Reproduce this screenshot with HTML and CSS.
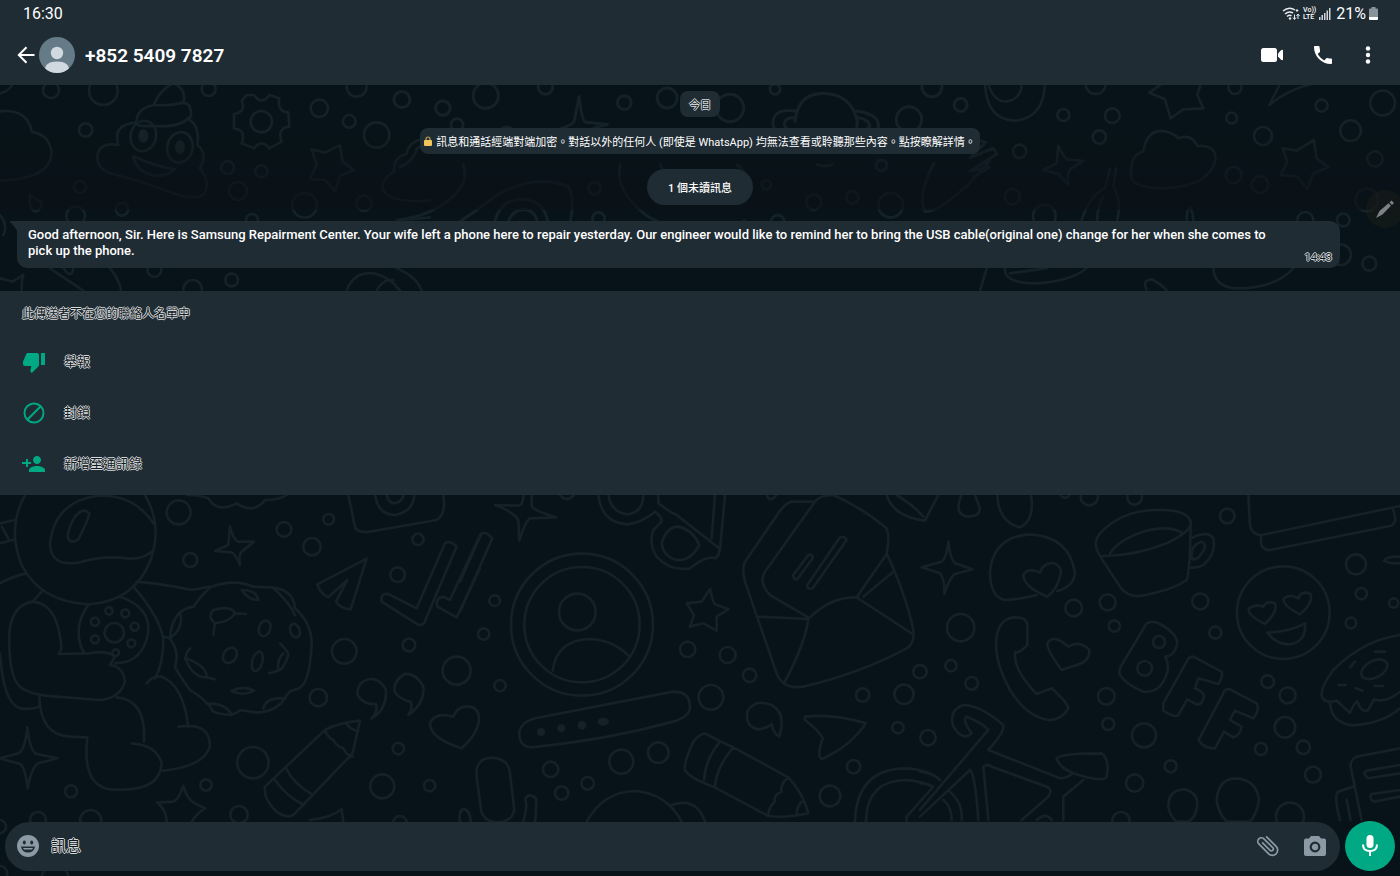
FILE: index.html
```html
<!DOCTYPE html>
<html lang="zh-Hant">
    <head>
        <meta charset="utf-8">
        <title>+852 5409 7827</title>
        <link rel="stylesheet" href="styles.css">
    </head>
    <body>
        <svg class="wallpaper" viewBox="0 0 1400 876" preserveAspectRatio="xMidYMid slice" aria-hidden="true">
            <defs>
                <linearGradient id="shade" x1="0" y1="0" x2="0" y2="1">
                    <stop offset="0" stop-color="#0b1118" stop-opacity="0" />
                    <stop offset="0.6" stop-color="#0b1118" stop-opacity="0.6" />
                    <stop offset="1" stop-color="#0b1118" stop-opacity="0.6" />
                </linearGradient>
            </defs>

            <!-- Top left: cloud, poop, gear, stars -->
            <g transform="translate(0 80) scale(.3333)">
                <path d="M-20 100Q20 85 55 100Q90 115 95 155Q150 165 155 220Q150 300-10 302M-10 42Q25 38 38 12" />
                <path d="M515 12Q475 35 462 75Q405 85 410 135Q430 140 470 138Q540 145 573 108Q575 70 550 68Q560 30 525 12M462 75Q510 78 550 68M405 128Q350 135 352 170Q350 185 355 195Q300 185 292 225Q290 265 330 280Q430 305 520 340Q580 360 610 345Q635 310 600 265Q625 220 592 195Q600 140 568 118" />
                <ellipse cx="430" cy="168" rx="38" ry="46" transform="rotate(12 430 168)" />
                <ellipse cx="540" cy="202" rx="38" ry="46" transform="rotate(12 540 202)" />
                <ellipse class="solid" cx="430" cy="168" rx="15" ry="21" />
                <ellipse class="solid" cx="540" cy="202" rx="15" ry="21" />
                <path d="M400 228Q460 258 525 268Q495 295 455 285Q405 270 400 228Z" />
                <path d="M740 45L762 45Q785 78 808 45L838 55Q830 95 865 97L868 140Q830 145 845 185L808 205Q785 175 762 205L725 190Q740 150 702 145L702 102Q740 95 725 62Z" />
                <circle cx="784" cy="125" r="32" />
                <path d="M935 208L975 218L1020 196L1028 245L1062 270L1020 288L1005 335L975 300L930 298L950 255Z" />
                <path d="M1290 172Q1225 180 1220 222Q1180 230 1182 275Q1140 300 1150 330Q1170 370 1290 362M90 345Q85 395 110 395Q130 380 122 365Q105 355 90 345M0 405Q25 435 10 465M0 595Q20 600 38 605L70 585Q62 610 66 640M150 565L250 632M330 565Q360 600 365 640M190 565Q215 600 220 565M1040 632Q1060 575 1120 580Q1170 590 1200 632M1130 632Q1150 595 1180 600M1190 565Q1250 590 1265 632M1190 420Q1240 418 1290 412" />
                <circle cx="153" cy="30" r="24" /><circle cx="310" cy="32" r="43" /><circle cx="626" cy="27" r="21" />
                <circle cx="257" cy="150" r="20" /><circle cx="958" cy="85" r="26" /><circle cx="1048" cy="124" r="19" />
                <circle cx="1070" cy="20" r="30" /><circle cx="1130" cy="165" r="38" />
                <circle cx="683" cy="263" r="19" /><circle cx="784" cy="274" r="18" /><circle cx="714" cy="333" r="27" />
                <circle cx="914" cy="376" r="37" /><circle cx="1092" cy="370" r="23" /><circle cx="240" cy="321" r="18" />
                <circle cx="227" cy="408" r="28" /><circle cx="366" cy="388" r="19" /><circle cx="756" cy="420" r="18" />
                <circle cx="463" cy="570" r="21" /><circle cx="578" cy="628" r="28" /><circle cx="695" cy="600" r="19" />
            </g>

            <!-- Top middle: planet, sparkle, guitar -->
            <g transform="translate(400 85) scale(.3827)">
                <path d="M468 30Q475 95 485 97L542 103Q500 110 490 125H435L408 118Q450 105 455 95ZM1032 95Q1040 20 1110 22Q1180 25 1195 95Q1195 110 1190 125M1035 68Q970 60 975 105Q980 125 1000 125M1190 68Q1250 75 1250 105Q1250 125 1235 125M1035 85Q1000 85 1005 105Q1010 120 1035 122M1195 85Q1225 90 1228 108Q1210 125 1195 120" />
                <path d="M0 215Q35 200 45 165L70 155M165 208Q180 250 145 285Q90 340 0 352M90 400Q200 330 250 290Q350 230 440 265Q465 310 430 405M245 405Q240 300 320 298Q400 305 385 405M270 405Q280 325 325 325Q370 330 358 405M575 208Q560 280 650 345Q780 420 900 355M680 208Q690 240 720 240M880 208Q920 240 900 270M1395 205Q1350 290 1372 330Q1400 335 1480 265L1540 200M1500 140L1530 150L1490 190L1550 165L1560 180L1490 225L1540 215L1500 240" />
                <path d="M1090 208Q1110 215 1130 208" />
                <circle cx="5" cy="38" r="21" /><circle cx="224" cy="28" r="33" /><circle cx="112" cy="60" r="19" />
                <circle cx="149" cy="104" r="16" /><circle cx="380" cy="5" r="19" /><circle cx="586" cy="46" r="18" />
                <circle cx="698" cy="34" r="26" /><circle cx="862" cy="60" r="36" /><circle cx="980" cy="11" r="13" />
                <circle cx="1330" cy="90" r="33" /><circle cx="1390" cy="5" r="26" /><circle cx="1465" cy="52" r="17" />
                <circle cx="278" cy="130" r="20" /><circle cx="508" cy="270" r="16" /><circle cx="519" cy="349" r="16" />
                <circle cx="957" cy="261" r="12" /><circle cx="1081" cy="306" r="20" /><circle cx="1182" cy="294" r="16" />
                <circle cx="1282" cy="314" r="32" /><circle cx="987" cy="357" r="17" /><circle cx="1174" cy="396" r="22" />
                <circle cx="1258" cy="210" r="14" /><circle cx="1480" cy="398" r="16" />
            </g>

            <!-- Top right: cloud, stars, bottle -->
            <g transform="translate(960 80) scale(.3333)">
                <path d="M75 12Q80 120 165 122Q250 115 255 12M85 12Q100 65 140 65Q185 55 185 12M568 38L605 12M568 38L615 58L632 115L670 88L730 85L712 45L722 12M960 12L928 75Q980 30 1055 12" />
                <path d="M515 298Q505 225 550 215Q560 150 610 153Q645 160 655 175Q695 160 712 198Q775 195 765 245Q745 320 610 325Q535 325 515 298Z" />
                <path d="M295 198Q310 230 322 238L370 243L330 268Q320 285 325 315L295 282L250 270L290 250ZM968 205L1010 212L1062 180L1070 235L1105 262L1060 280L1042 328L1012 290L962 285L982 245ZM450 265L435 325Q390 345 365 420M468 265L460 320Q485 360 472 420M430 350Q410 390 412 420M680 420Q680 390 690 380Q700 400 700 420M135 565Q130 610 230 610Q330 605 380 565M150 580Q220 570 260 565M760 565Q765 630 850 625Q950 620 1000 565M560 630Q545 600 575 598Q600 610 620 630M80 565L60 632" />
                <circle cx="310" cy="105" r="18" /><circle cx="407" cy="12" r="30" />
                <circle cx="457" cy="107" r="22" /><circle cx="418" cy="171" r="20" /><circle cx="179" cy="214" r="20" />
                <circle cx="825" cy="22" r="20" /><circle cx="815" cy="114" r="16" /><circle cx="909" cy="168" r="27" />
                <circle cx="1085" cy="77" r="18" /><circle cx="1268" cy="69" r="37" /><circle cx="1172" cy="152" r="31" />
                <circle cx="1245" cy="237" r="23" /><circle cx="821" cy="285" r="24" /><circle cx="900" cy="314" r="25" />
                <circle cx="157" cy="350" r="23" /><circle cx="253" cy="408" r="34" />
                <circle cx="1221" cy="360" r="34" /><circle cx="1036" cy="420" r="24" /><circle cx="1150" cy="420" r="19" />
                <circle cx="1142" cy="524" r="31" /><circle cx="1228" cy="551" r="21" />
            </g>

            <rect class="shade" x="0" y="135" width="1400" height="75" fill="url(#shade)" />

            <!-- Bottom left: astronaut, cookie, pencil -->
            <g transform="translate(0 490) scale(.3333)">
                <path d="M75 15Q20 115 65 225Q120 335 265 343Q400 335 450 215Q490 110 435 15M455 185Q425 210 380 205Q310 195 235 218Q150 230 150 160Q165 35 290 18Q400 10 460 100M225 80Q250 50 268 70Q265 90 235 148Q210 165 203 140Q205 110 225 80M0 100L45 90M5 110L25 145M0 160L45 148M0 280Q35 260 80 250M125 305L98 335M98 335Q35 345 28 430Q25 560 60 590Q90 615 170 620L300 630Q360 625 375 575Q370 530 330 525L345 500Q320 480 270 490L175 492Q190 480 180 440Q165 340 98 335M0 490Q10 640 60 655Q95 660 118 650M118 618Q120 735 210 740L262 742Q245 885 330 898Q480 910 485 820Q470 765 395 760M350 622Q440 630 432 755M440 580Q460 555 485 560Q550 585 565 710M535 710Q630 695 630 770Q610 830 490 842" />
                <path d="M265 345Q225 400 240 460Q245 480 255 490M360 320Q450 350 445 425Q430 520 345 520M400 290Q480 380 490 450Q490 520 465 565M410 275Q480 280 575 300L630 290M490 440L510 445" />
                <path d="M630 292Q700 265 760 290L820 293Q880 300 885 355Q935 400 935 460Q930 590 890 598Q865 600 855 625Q830 665 770 668L720 660Q700 685 640 665Q620 630 570 600Q540 560 525 530Q540 490 510 445Q515 360 580 350Q600 320 630 292M820 293Q870 340 885 375M510 445Q550 415 542 375M725 300Q770 300 775 330Q745 330 725 300M738 372L705 370Q690 395 645 400L640 435M705 370Q695 345 640 360Q620 380 645 400M570 475Q545 505 570 510Q620 530 620 562Q580 565 555 505M620 562L645 568M840 460Q870 490 865 495Q850 540 835 542L808 550M850 490Q830 510 835 542M620 640Q680 640 695 675M790 655Q800 620 855 625M695 603Q730 585 762 602Q730 620 695 603" />
                <ellipse cx="794" cy="415" rx="17" ry="24" transform="rotate(20 794 415)" />
                <ellipse cx="885" cy="422" rx="14" ry="21" transform="rotate(-20 885 422)" />
                <ellipse cx="690" cy="496" rx="19" ry="25" transform="rotate(35 690 496)" />
                <ellipse cx="772" cy="514" rx="15" ry="30" transform="rotate(15 772 514)" />
                <circle cx="343" cy="428" r="29" /><circle cx="327" cy="363" r="11" /><circle cx="376" cy="370" r="12" />
                <circle cx="285" cy="395" r="12" /><circle cx="404" cy="410" r="12" /><circle cx="285" cy="448" r="12" />
                <circle cx="394" cy="460" r="12" /><circle cx="347" cy="488" r="10" />
                <path d="M690 110Q700 150 715 155L762 155L725 185Q715 195 720 225Q705 190 695 187L645 183L685 165ZM82 712Q90 785 110 792L172 805L115 820Q95 830 83 895Q75 830 60 822L0 805L55 790Q75 780 82 712ZM560 15Q600 15 625 25Q650 70 710 40Q760 75 795 30Q840 30 865 12" />
                <path d="M952 283L1100 206L1052 358Q1020 355 1008 335L1042 270L985 322Q960 310 952 283ZM1045 15L1065 110Q1070 130 1110 125L1310 90Q1340 70 1330 15M1125 15Q1135 75 1185 75Q1240 65 1243 15M1160 15Q1165 40 1185 40Q1208 35 1210 15" />
                <path d="M1145 335Q1140 310 1165 312L1250 355L1335 160Q1350 150 1370 170L1272 400Q1265 408 1250 402ZM1440 135L1350 330L1330 320Q1305 325 1312 350L1370 382L1440 235" />
                <path d="M1115 685Q1160 660 1158 600Q1140 565 1110 567Q1070 575 1073 615Q1090 645 1128 642Q1135 665 1115 685ZM1225 675Q1275 640 1270 590Q1250 550 1215 552Q1180 570 1184 605Q1200 630 1232 635Q1240 655 1225 675ZM1385 775Q1290 745 1290 700Q1305 665 1360 680Q1375 645 1410 650Q1440 655 1437 695Q1430 735 1385 775Z" />
                <path d="M1080 692L1058 790L885 970Q865 990 830 965Q790 930 795 890L975 720Q1010 700 1080 692M975 720Q985 745 1000 750Q1010 770 1030 775Q1040 795 1058 800M1040 700Q1050 720 1075 722M860 838Q880 880 938 915M825 870Q860 920 912 945M550 888Q560 925 580 938L615 955Q590 970 575 995M550 888Q535 930 520 935L472 938Q500 960 500 995M930 990Q990 985 1025 958L1030 995M1380 995Q1375 965 1392 958Q1410 960 1412 995" />
                <circle cx="536" cy="67" r="36" /><circle cx="852" cy="118" r="22" /><circle cx="986" cy="88" r="16" />
                <circle cx="936" cy="170" r="26" /><circle cx="571" cy="210" r="21" /><circle cx="1254" cy="148" r="17" />
                <circle cx="1193" cy="254" r="22" /><circle cx="1033" cy="484" r="37" /><circle cx="1227" cy="465" r="19" />
                <circle cx="1370" cy="542" r="42" /><circle cx="955" cy="623" r="26" /><circle cx="759" cy="818" r="47" />
                <circle cx="1195" cy="776" r="17" /><circle cx="1147" cy="889" r="36" /><circle cx="1289" cy="887" r="17" />
                <circle cx="618" cy="885" r="17" /><circle cx="213" cy="904" r="18" /><circle cx="717" cy="974" r="26" />
                <circle cx="114" cy="990" r="24" /><circle cx="272" cy="992" r="32" /><circle cx="1200" cy="998" r="20" />
                <circle cx="-2" cy="1010" r="20" /><circle cx="0" cy="1150" r="22" /><circle cx="165" cy="1165" r="40" />
            </g>

            <!-- Bottom middle: contact, envelope, pencil -->
            <g transform="translate(460 490) scale(.3333)">
                <path d="M190 15Q190 45 175 47L105 45Q160 65 175 90L178 152Q195 95 210 85L288 82Q230 65 215 50V15M0 275L65 130Q80 125 97 145L0 365" />
                <circle cx="366" cy="404" r="213" /><circle cx="366" cy="404" r="173" /><circle cx="352" cy="366" r="55" />
                <path d="M278 542Q290 450 390 447Q460 450 505 497M415 15Q425 100 505 103Q550 95 585 65Q605 80 605 95L580 120Q565 160 590 200Q630 245 690 235Q740 195 765 205Q780 195 778 175L650 75L630 65L595 40V15M445 15Q455 70 505 73Q550 65 550 15M605 160Q620 110 655 110Q700 120 718 165Q690 215 650 210Q610 200 605 160M755 145L765 15M780 180L795 15" />
                <path d="M750 297Q760 340 765 343L805 358L770 380V422L730 400L690 410L702 375L680 340L725 335Z" />
                <path d="M1065 35L995 35Q975 40 955 70L855 215Q845 235 855 275L950 550Q970 600 1030 590Q1200 550 1340 475Q1365 460 1360 420Q1340 320 1280 190Q1290 140 1280 115Q1210 55 1120 15Q1080 15 1065 35L915 245Q895 280 930 315L1045 382Q1040 450 975 575M890 380L1045 387Q1110 320 1190 322L1355 430M1190 322L1278 195M1210 320L1300 245M1045 195Q1060 190 1058 205L1012 268Q1000 270 1000 255ZM1140 142Q1155 138 1160 150L1058 295Q1040 300 1042 285ZM1280 15Q1300 80 1395 92L1435 15M1310 15Q1360 45 1390 80M920 15Q930 40 950 15M300 15Q320 40 342 15" />
                <path d="M225 685L640 605Q690 605 690 650Q690 680 640 695Q440 750 215 772Q175 770 178 725Q185 695 225 685Z" />
                <circle class="solid" cx="243" cy="726" r="12" /><circle class="solid" cx="304" cy="715" r="12" />
                <circle class="solid" cx="366" cy="706" r="13" /><ellipse class="solid" cx="430" cy="695" rx="17" ry="12" />
                <path d="M958 740Q980 670 935 645Q885 625 862 665Q855 715 900 718Q930 710 935 702Q940 730 958 740ZM1035 680Q1120 670 1218 700Q1170 770 1085 808Q1070 800 1088 745Q1080 725 1035 690ZM735 730Q715 735 700 755Q670 820 675 840Q690 865 760 890L925 978Q980 985 1045 970Q1030 910 985 862L820 772Q780 755 735 730M780 755Q735 810 732 870M820 772Q770 830 765 890M985 862Q960 880 965 905Q940 915 945 935Q925 950 925 978M1025 935Q1010 950 1010 975" />
                <path d="M50 860Q45 805 95 803Q145 805 150 850L163 960Q155 995 115 997Q70 995 63 960ZM190 995Q205 940 195 930Q205 905 228 925Q230 960 225 995M0 965Q10 950 25 965Q32 980 32 995M380 995Q430 905 525 903Q620 910 665 995M635 945Q710 920 735 995M1185 995Q1190 835 1340 835Q1410 840 1440 870M1218 995Q1220 870 1340 870Q1390 875 1420 890L1340 980V995" />
                <circle cx="104" cy="332" r="16" /><circle cx="71" cy="432" r="17" /><circle cx="120" cy="587" r="17" />
                <circle cx="683" cy="478" r="23" /><circle cx="803" cy="495" r="24" />
                <circle cx="869" cy="556" r="20" /><circle cx="753" cy="622" r="37" /><circle cx="1380" cy="545" r="20" />
                <circle cx="1332" cy="613" r="29" /><circle cx="1208" cy="615" r="20" /><circle cx="1314" cy="713" r="17" />
                <circle cx="1181" cy="830" r="20" /><circle cx="1110" cy="918" r="31" /><circle cx="484" cy="815" r="36" />
                <circle cx="595" cy="788" r="31" /><circle cx="272" cy="838" r="23" /><circle cx="305" cy="909" r="20" />
                <circle cx="383" cy="880" r="19" />
            </g>

            <!-- Bottom right: cup, phone, BFF, donut -->
            <g transform="translate(920 490) scale(.3333)">
                <path d="M125 15Q100 70 140 80Q185 80 178 50L165 15M232 15Q235 95 298 112Q345 95 333 15M85 155Q90 205 105 220L158 238L105 252Q90 260 73 312Q75 270 60 250L5 232L65 215Q80 205 85 155" />
                <path d="M350 315Q290 330 255 330Q210 320 210 245Q220 140 330 133Q450 140 465 250Q460 290 412 303M382 320Q310 290 310 255Q325 230 360 248Q370 215 405 220Q430 235 420 260Q410 300 382 320ZM425 540Q380 480 382 460Q400 430 445 470Q480 450 508 480Q510 515 470 525Z" />
                <path d="M540 198Q515 160 540 130Q600 65 700 60Q800 55 812 95Q820 120 740 160Q640 200 540 198L600 290Q620 320 660 318Q760 300 800 270Q810 250 812 100M570 190Q600 145 680 122Q750 105 790 130M812 145Q865 120 880 145Q890 190 850 225Q835 235 810 232M815 205Q810 165 845 155Q865 165 845 190Q830 215 815 205M985 15L990 105Q995 135 1025 135L1440 48M1025 135Q1015 180 1050 180L1410 108Q1435 100 1420 60M1440 200Q1400 198 1392 212Q1410 222 1440 220" />
                <path d="M230 440Q240 380 290 382Q325 385 322 410V465Q300 490 285 487Q280 540 350 612L395 595Q440 635 445 655Q425 690 385 690Q320 680 270 600Q220 510 230 440ZM680 400Q700 390 720 402Q790 440 765 480Q755 500 735 500Q755 530 730 575Q710 610 670 605Q620 585 600 555Q595 540 605 525ZM820 500L905 545Q910 560 895 582L835 565L825 595Q860 610 850 625Q845 645 830 643L802 628L775 675Q765 685 730 662V640L800 515Q805 500 820 500ZM930 598L1010 640Q1020 660 1000 685L945 662L930 690L965 710Q960 735 940 742L912 725L885 775Q850 775 836 750L910 610Q915 595 930 598Z" />
                <circle cx="717" cy="456" r="18" /><circle cx="674" cy="535" r="22" /><circle cx="1090" cy="368" r="139" />
                <path d="M1035 402Q980 375 987 355Q1010 340 1030 350Q1040 330 1065 340Q1075 365 1035 402ZM1140 373Q1085 345 1092 325Q1110 310 1135 325Q1145 300 1172 312Q1180 340 1140 373ZM1042 428Q1110 425 1155 400Q1160 455 1110 463Q1070 465 1042 428ZM1440 435Q1330 450 1240 540Q1195 600 1208 625Q1220 640 1250 632L1290 668Q1305 635 1312 635Q1325 670 1345 660L1362 628Q1400 640 1440 605M1230 640Q1235 700 1300 706Q1390 700 1440 655M1365 485H1395M1290 532L1305 515M1255 585H1278M1308 595L1328 602M1365 588H1390" />
                <ellipse cx="1363" cy="538" rx="42" ry="25" transform="rotate(-28 1363 538)" />
                <path d="M0 960L205 720Q190 700 140 680Q125 690 155 730Q130 755 100 710Q85 660 130 645Q180 645 250 705Q255 725 205 780L420 865Q440 865 460 850Q415 830 410 805Q420 790 545 790Q570 810 560 860Q550 880 460 850M0 980L150 840Q165 850 175 990M205 990L190 830Q200 820 220 832L380 890Q400 900 385 920L305 990M490 870L430 920V990M0 845Q40 850 60 870M0 880Q25 880 35 890M90 905Q130 940 125 990M70 930Q95 950 95 990M350 990Q380 965 395 990M1440 775L1310 800Q1290 810 1292 830L1325 990M1440 825L1340 842Q1325 850 1345 865L1440 850M1440 900L1355 912Q1345 925 1362 935L1440 920M1300 890L1255 905Q1240 915 1260 990M1280 930L1292 990" />
                <path d="M745 950Q745 900 790 898Q835 905 832 950Q825 985 805 995H770Q750 980 745 950M890 930Q895 865 950 865Q1010 870 1017 930Q1010 975 990 995H920Q895 970 890 930" />
                <circle cx="508" cy="20" r="26" /><circle cx="644" cy="22" r="22" /><circle cx="435" cy="8" r="15" />
                <circle cx="922" cy="78" r="22" /><circle cx="122" cy="413" r="41" /><circle cx="461" cy="354" r="25" />
                <circle cx="563" cy="337" r="24" /><circle cx="841" cy="334" r="24" /><circle cx="583" cy="408" r="17" />
                <circle cx="886" cy="428" r="18" /><circle cx="1308" cy="223" r="30" /><circle cx="1324" cy="311" r="17" />
                <circle cx="1421" cy="339" r="14" /><circle cx="1293" cy="399" r="16" /><circle cx="93" cy="527" r="17" />
                <circle cx="155" cy="580" r="19" /><circle cx="24" cy="743" r="23" /><circle cx="559" cy="619" r="25" />
                <circle cx="565" cy="702" r="18" /><circle cx="672" cy="736" r="36" /><circle cx="752" cy="829" r="18" />
                <circle cx="644" cy="879" r="26" /><circle cx="1043" cy="575" r="19" /><circle cx="1103" cy="616" r="24" />
                <circle cx="1095" cy="712" r="31" /><circle cx="1023" cy="777" r="18" /><circle cx="1150" cy="772" r="20" />
                <circle cx="1179" cy="854" r="24" /><circle cx="1110" cy="980" r="42" /><circle cx="603" cy="992" r="26" />
            </g>
        </svg>

        <header>
            <div class="status-bar">
                <span>16:30</span>
                <div class="status-icons">
                    <svg width="18" height="14" viewBox="0 0 18 14">
                        <path d="M1 4Q7-1 13 3M3 7Q7 3.500 11 6M5 9.500Q7.500 7.500 9.500 9" fill="none" stroke="#e8ecee" stroke-width="1.500" />
                        <circle cx="8" cy="11.500" r="1.200" fill="#e8ecee" />
                        <path d="M12.500 7.500V12M11 10.500l1.500 2 1.500-2M16 12V7.500M14.500 9l1.500-2 1.500 2M15 2v3M13.700 3.500h2.600" fill="none" stroke="#e8ecee" />
                    </svg>
                    <span class="volte">Vo))<br>LTE</span>
                    <svg width="12" height="12" viewBox="0 0 12 12">
                        <path d="M0 9h1.500v3H0zM2.500 7H4v5H2.500zM5 5h1.500v7H5zM7.500 2.500H9V12H7.500zM10 0h1.500v12H10z" fill="#cfd5d8" />
                    </svg>
                    <span class="battery-level">21%</span>
                    <svg width="9" height="13" viewBox="0 0 9 13">
                        <path d="M2.500 0h4v1.500H8q1 0 1 1V10H0V2.500q0-1 1-1h1.500z" fill="#89939a" />
                        <path d="M0 10h9v2q0 1-1 1H1q-1 0-1-1z" fill="#fff" />
                    </svg>
                </div>
            </div>
            <div class="app-bar">
                <button class="back" aria-label="返回">
                    <svg width="18" height="18" viewBox="0 0 18 18"><path d="M17.500 9H2M9.500 1.300L1.800 9l7.700 7.700" fill="none" stroke="#fff" stroke-width="2" /></svg>
                </button>
                <svg class="avatar" viewBox="0 0 36 36">
                    <defs><clipPath id="avatar-clip"><circle cx="18" cy="18" r="18" /></clipPath></defs>
                    <g clip-path="url(#avatar-clip)">
                        <rect width="36" height="36" fill="#667b88" />
                        <circle cx="18" cy="16" r="6.200" fill="#cfd9df" />
                        <path d="M6 33Q6 24.500 18 24.500T30 33V36H6z" fill="#cfd9df" />
                    </g>
                </svg>
                <h1>+852 5409 7827</h1>
                <div class="actions">
                    <button aria-label="視像通話">
                        <svg width="24" height="24" viewBox="0 0 24 24"><rect x="1" y="5" width="16" height="14" rx="2.500" fill="#fff" /><path d="M18 10.500L21 7.200Q23 6 23 8V16Q23 18 21 16.800L18 13.500z" fill="#fff" /></svg>
                    </button>
                    <button aria-label="語音通話">
                        <svg width="24" height="24" viewBox="0 0 24 24"><path d="M6.540 5c.06.890.210 1.760.450 2.590l-1.200 1.200c-.410-1.200-.670-2.470-.760-3.790zM4 3h3.500c.550 0 1 .450 1 1 0 1.250.200 2.450.570 3.570.110.350.030.740-.250 1.020l-2.200 2.200c1.440 2.830 3.760 5.140 6.590 6.590l2.200-2.200c.280-.280.670-.360 1.020-.250 1.120.370 2.320.570 3.570.570.550 0 1 .450 1 1V20c0 .550-.450 1-1 1C10.610 21 3 13.390 3 4c0-.550.450-1 1-1z" fill="#fff" /><path d="M4 4h4l1 5-3 2zM20 20v-3.500l-4-1-3 3z" fill="#fff" /></svg>
                    </button>
                    <button class="more" aria-label="更多選項">
                        <svg width="24" height="24" viewBox="0 0 24 24" fill="#fff"><circle cx="12" cy="5.500" r="2.200" /><circle cx="12" cy="12" r="2.200" /><circle cx="12" cy="18.500" r="2.200" /></svg>
                    </button>
                </div>
            </div>
        </header>

        <main>
            <div class="chat-messages">
                <div class="chips">
                    <div class="date-chip hollow">今日</div>
                    <button class="encryption-note">
                        <svg width="8" height="10" viewBox="0 0 8 10"><path d="M2 5V3a2 2 0 0 1 4 0v2" fill="none" stroke="#c9a94e" stroke-width="1.200" /><rect y="4" width="8" height="6" rx="1" fill="#f2c55c" /></svg>
                        <span>訊息和通話經端對端加密。對話以外的任何人 (即使是 WhatsApp) 均無法查看或聆聽那些內容。點按瞭解詳情。</span>
                    </button>
                    <div class="unread">1 個未讀訊息</div>
                </div>
                <div class="message">
                    <svg class="tail" width="8" height="12" viewBox="0 0 8 12"><path d="M0 0H8V12Q6 7 0 1z" fill="#1f2c34" /></svg>
                    <p>Good afternoon, Sir. Here is Samsung Repairment Center. Your wife left a phone here to repair yesterday. Our engineer would like to remind her to bring the USB cable(original one) change for her when she comes to pick up the phone.</p>
                    <time class="hollow">14:43</time>
                </div>
            </div>

            <section class="contact-panel">
                <p class="hollow">此傳送者不在您的聯絡人名單中</p>
                <button>
                    <svg width="24" height="24" viewBox="0 0 24 24"><path d="M15 3H6c-.830 0-1.540.500-1.840 1.220l-3.020 7.050c-.090.230-.140.470-.140.730v2c0 1.100.900 2 2 2h6.310l-.950 4.570-.030.320c0 .410.170.790.440 1.060L9.830 23l6.590-6.590c.360-.360.580-.860.580-1.410V5c0-1.100-.900-2-2-2zm4 0v12h4V3h-4z" /></svg>
                    <span class="hollow">舉報</span>
                </button>
                <button>
                    <svg width="24" height="24" viewBox="0 0 24 24"><path d="M12 1.500a10.500 10.500 0 1 0 0 21 10.500 10.500 0 0 0 0-21zM3.500 12a8.500 8.500 0 0 1 13.700-6.700L5.300 17.200A8.400 8.400 0 0 1 3.500 12zm8.500 8.500a8.400 8.400 0 0 1-5.200-1.800L18.700 6.800A8.500 8.500 0 0 1 12 20.500z" /></svg>
                    <span class="hollow">封鎖</span>
                </button>
                <button>
                    <svg width="24" height="24" viewBox="0 0 24 24"><path d="M15 12c2.210 0 4-1.790 4-4s-1.790-4-4-4-4 1.790-4 4 1.790 4 4 4zm-9-2V7H4v3H0v2h4v3h2v-3h3v-2H6zm9 4c-2.670 0-8 1.340-8 4v2h16v-2c0-2.660-5.330-4-8-4z" /></svg>
                    <span class="hollow">新增至通訊錄</span>
                </button>
            </section>
        </main>

        <form class="composer">
            <div class="input-pill">
                <button type="button" aria-label="表情">
                    <svg width="22" height="22" viewBox="0 0 22 22"><circle cx="11" cy="11" r="11" fill="#8b9aa4" /><ellipse cx="7.300" cy="7.500" rx="1.500" ry="2" fill="#1f2c34" /><ellipse cx="14.700" cy="7.500" rx="1.500" ry="2" fill="#1f2c34" /><path d="M4 11.500H18Q17 17.500 11 17.500T4 11.500z" fill="#1f2c34" /><path d="M6 13H16L15 14.500H7z" fill="#8b9aa4" /></svg>
                </button>
                <input type="text" placeholder="訊息" aria-label="訊息" autocomplete="off">
                <button type="button" aria-label="附件">
                    <svg width="24" height="24" viewBox="0 0 24 24"><path d="M17.500 4.500v13.500a5 5 0 0 1-10.500 0V4a3.600 3.600 0 0 1 7.200 0v12.500a1.900 1.900 0 0 1-3.800 0V6" transform="rotate(-45 12 12)" fill="none" stroke="#8b9aa4" stroke-width="1.700" stroke-linecap="round" /></svg>
                </button>
                <button type="button" class="camera" aria-label="相機">
                    <svg width="22" height="20" viewBox="0 0 22 20"><path d="M7 0h8l2 2.500h3q2 0 2 2V18q0 2-2 2H2q-2 0-2-2V4.500q0-2 2-2h3z" fill="#8b9aa4" /><circle cx="11" cy="11" r="4.300" fill="none" stroke="#1f2c34" stroke-width="2.200" /></svg>
                </button>
            </div>
            <button type="button" class="mic" aria-label="語音訊息">
                <svg width="18" height="24" viewBox="0 0 18 24"><rect x="5.500" y="1" width="7" height="13" rx="3.500" fill="#fff" /><path d="M2 10.500Q2 17 9 17T16 10.500M9 17V22" fill="none" stroke="#fff" stroke-width="2" /></svg>
            </button>
        </form>

        <!-- Floating stylus shortcut -->
        <button class="stylus" aria-label="S Pen">
            <svg width="20" height="20" viewBox="0 0 20 20" fill="#7c8285"><path d="M1 19L4.500 12 13.500 4.200 16 6.800 7.500 15.500zM14.500 3.500L16.500 1.500 19 4 17 6z" /></svg>
        </button>
    </body>
</html>
```
FILE: styles.css
```css
* {
    box-sizing: border-box;
}

body {
    margin: 0;
    min-height: 100vh;
    display: flex;
    flex-direction: column;
    position: relative;
    overflow-x: hidden;
    background: #071318;
    font-family: Roboto, "Noto Sans CJK TC", sans-serif;
    color: #fff;
}

h1, p {
    margin: 0;
}

svg {
    display: block;
}

button {
    display: flex;
    align-items: center;
    justify-content: center;
    padding: 0;
    border: none;
    background: none;
    color: inherit;
    font: inherit;
    cursor: pointer;
}

.wallpaper {
    position: absolute;
    z-index: -1;
    top: 0;
    left: 0;
    width: 100%;
    height: 100%;
    fill: none;
    stroke: #142127;
    stroke-width: 8;
    stroke-linecap: round;
    stroke-linejoin: round;
}

.wallpaper .solid {
    fill: #142127;
    stroke: none;
}

.wallpaper .shade {
    stroke: none;
}

/* dark glyphs with a light rim */
.hollow,
.input-pill input::placeholder {
    color: #10181c;
    text-shadow: 1px 0 0 #d5d9db, -1px 0 0 #d5d9db, 0 1px 0 #d5d9db, 0 -1px 0 #d5d9db;
}

header {
    background: #1f2c34;
}

.status-bar {
    display: flex;
    justify-content: space-between;
    align-items: center;
    height: 27px;
    padding: 0 22px 0 23px;
    font-size: 16px;
}

.status-icons {
    display: flex;
    align-items: center;
    gap: 3px;
}

.volte {
    font-size: 7px;
    line-height: 7px;
    font-weight: 500;
}

.battery-level {
    margin-left: 2px;
}

.app-bar {
    display: flex;
    align-items: center;
    height: 58px;
    padding: 0 20px 2px 17px;
}

.avatar {
    width: 36px;
    height: 36px;
    margin: 0 10px 0 4px;
}

.app-bar h1 {
    font-size: 19px;
    font-weight: 600;
}

.actions {
    display: flex;
    gap: 27px;
    margin-left: auto;
}

.actions .more {
    margin-left: -6px;
}

main {
    flex: 1;
}

.chat-messages {
    padding: 6px 0 23px;
}

.chips {
    display: flex;
    flex-direction: column;
    align-items: center;
}

.date-chip,
.encryption-note,
.unread {
    display: flex;
    align-items: center;
    background: #1f2c34;
    border-radius: 8px;
    font-size: 11px;
}

.date-chip {
    height: 26px;
    padding: 0 9px;
}

.encryption-note {
    gap: 4px;
    height: 26px;
    margin-top: 11px;
    padding: 0 4px;
}

.unread {
    height: 36px;
    margin-top: 15px;
    padding: 0 21px;
    border-radius: 18px;
    font-weight: 500;
}

.message {
    position: relative;
    margin: 16px 60px 0 17px;
    padding: 6px 8px 9px 11px;
    background: #1f2c34;
    border-radius: 0 10px 10px 10px;
}

.message p {
    padding-right: 48px;
    font-size: 13px;
    font-weight: 500;
    line-height: 16px;
}

.message time {
    position: absolute;
    right: 8px;
    bottom: 4px;
    font-size: 11px;
    line-height: 13px;
}

.tail {
    position: absolute;
    top: 0;
    left: -7px;
}

.contact-panel {
    padding: 14px 22px 6px;
    background: #1f2c34;
}

.contact-panel p {
    margin-bottom: 13px;
    font-size: 12px;
    line-height: 18px;
}

.contact-panel button {
    gap: 18px;
    height: 51px;
    font-size: 13px;
}

.contact-panel button span {
    padding-bottom: 3px;
}

.contact-panel svg {
    fill: #00a884;
}

.composer {
    display: flex;
    align-items: center;
    gap: 5px;
    padding: 0 5px 5px;
}

.input-pill {
    flex: 1;
    display: flex;
    align-items: center;
    height: 49px;
    padding: 0 14px 0 12px;
    background: #1f2c34;
    border-radius: 25px;
}

.input-pill input {
    flex: 1;
    min-width: 0;
    padding: 0 12px;
    border: none;
    outline: none;
    background: none;
    color: #fff;
    font: inherit;
    font-size: 15px;
}

.input-pill input::placeholder {
    opacity: 1;
}

.camera {
    margin-left: 24px;
}

.mic {
    width: 50px;
    height: 50px;
    border-radius: 50%;
    background: #00a884;
}

.stylus {
    position: absolute;
    top: 190px;
    right: -4px;
    width: 38px;
    height: 38px;
    border-radius: 50%;
    background: rgba(40, 36, 28, 0.3);
}
```
